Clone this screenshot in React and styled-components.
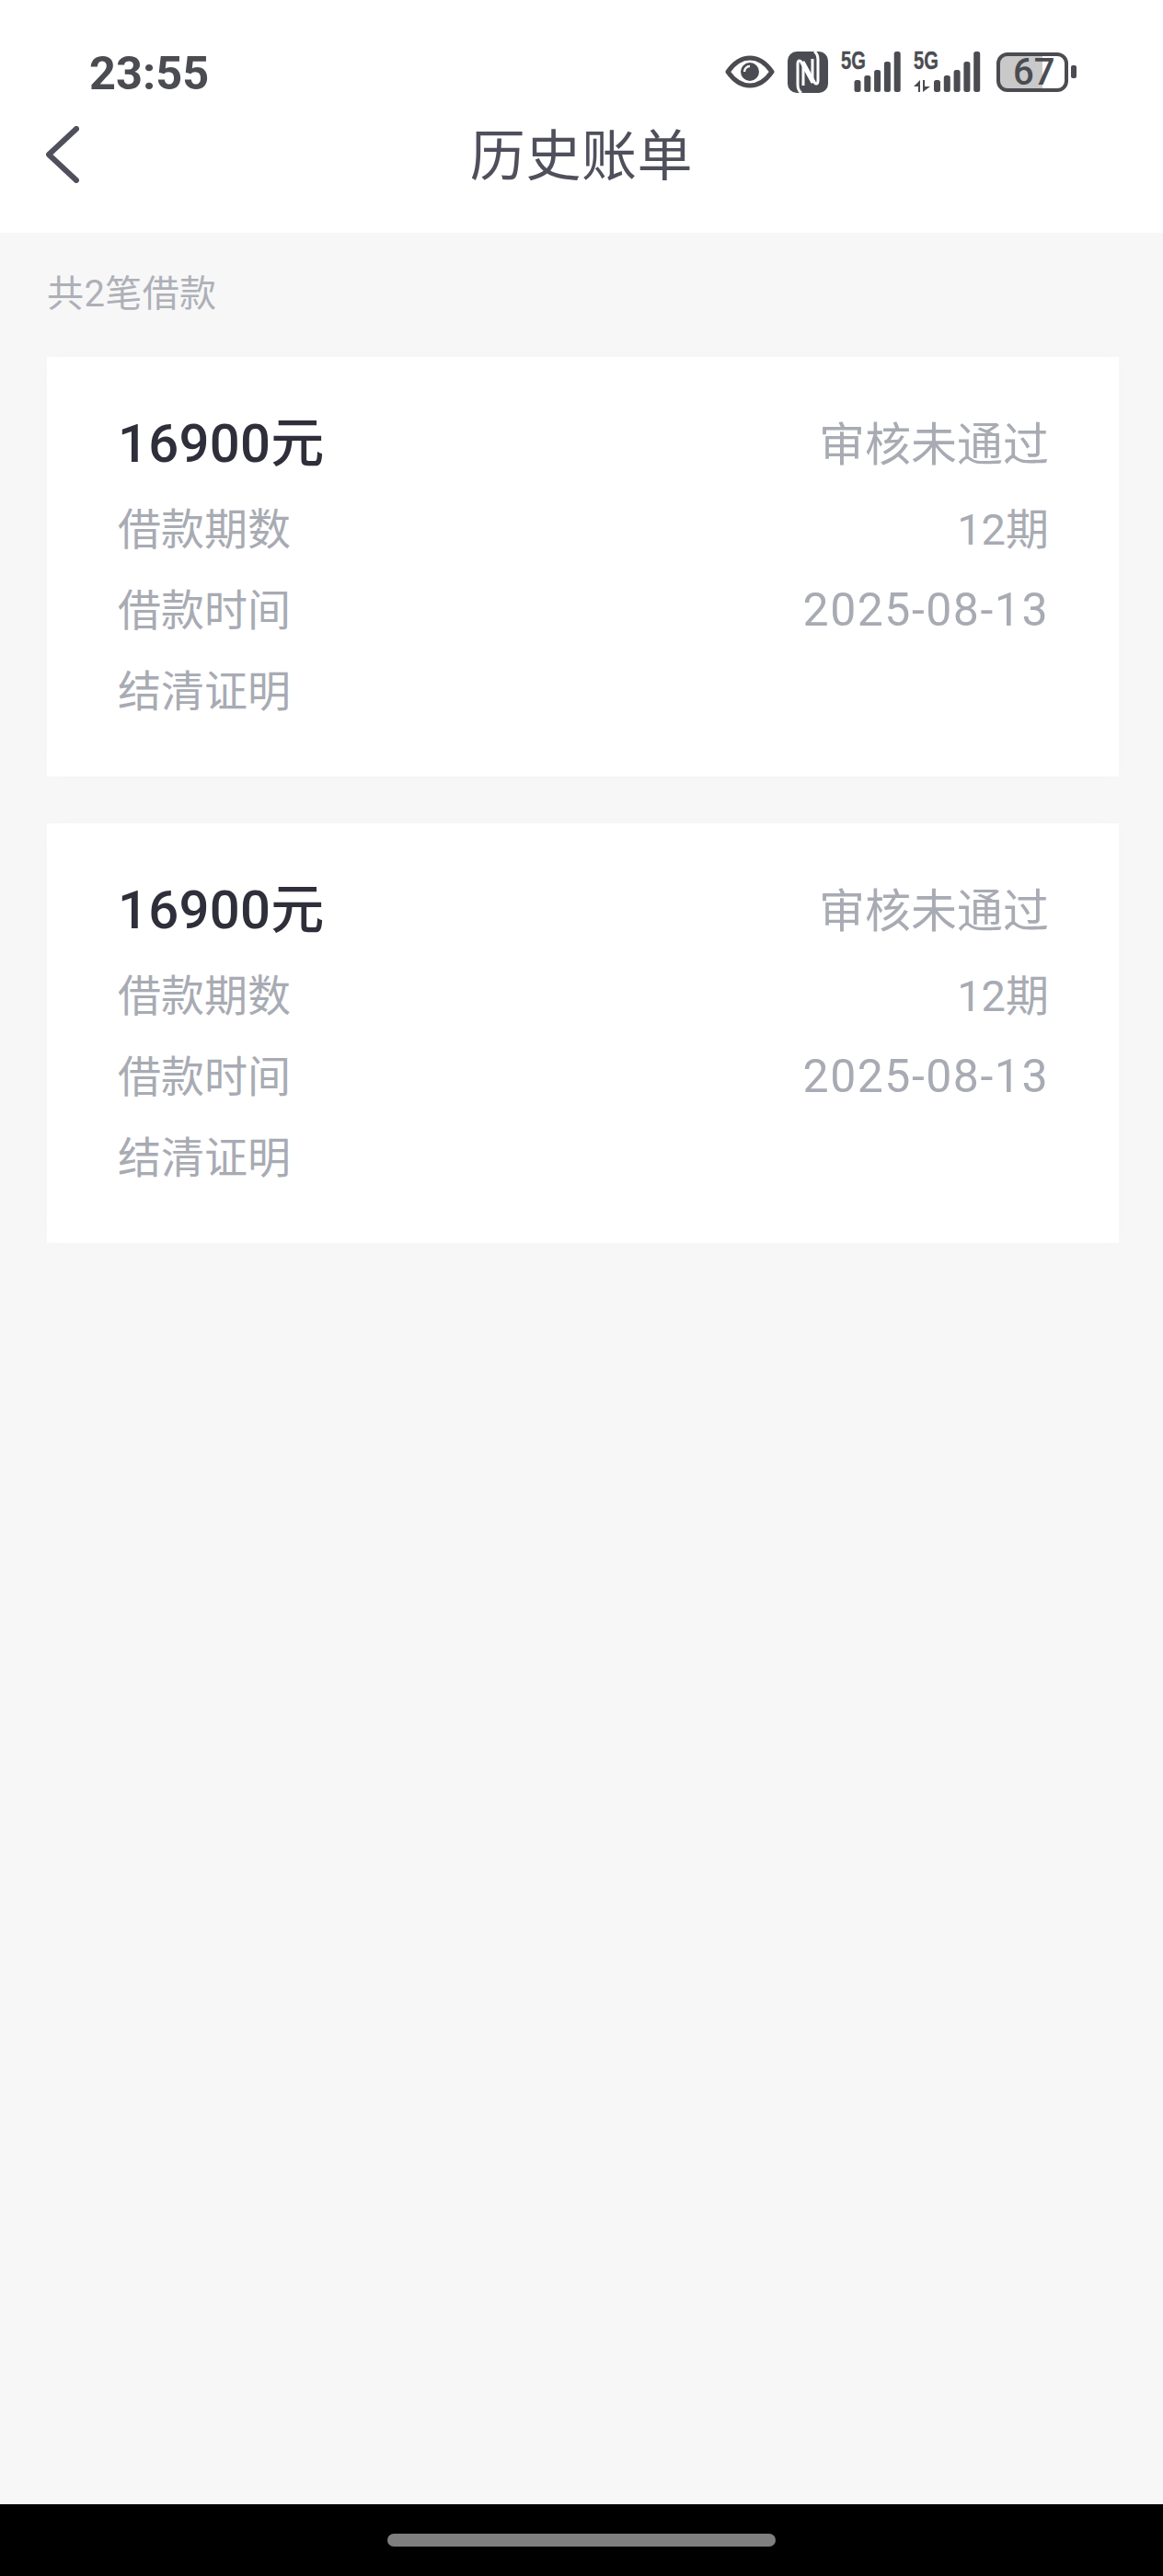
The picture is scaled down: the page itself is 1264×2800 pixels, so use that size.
import styled, { createGlobalStyle } from 'styled-components'

const GlobalStyle = createGlobalStyle`
  html, body { margin: 0; padding: 0; }
  body { font-family: Roboto, "Noto Sans CJK SC", sans-serif; background: #f7f7f7; }
`

const Page = styled.div`
  display: flex;
  flex-direction: column;
  height: 2800px;
  background: #f7f7f7;
`
const Header = styled.header`
  background: #fff;
  height: 253px;
  flex-shrink: 0;
`
const StatusBar = styled.div`
  display: flex;
  align-items: center;
  justify-content: space-between;
  box-sizing: border-box;
  height: 103px;
  padding: 53px 94px 0 97px;
`
const Time = styled.div`
  font-family: Roboto, sans-serif;
  font-size: 50.5px;
  font-weight: 700;
  line-height: 50px;
  padding-top: 4px;
  color: #4b4c52;
`
const StatusIcons = styled.div`
  display: flex;
  align-items: center;
  gap: 14px;
`
const Signal = styled.div`
  position: relative;
  display: flex;
  width: ${p => (p.$arrows ? '76px' : '65px')};
  height: 45px;
`
const NetLabel = styled.span`
  position: absolute;
  left: 0;
  top: 0;
  font-family: "Liberation Sans", sans-serif;
  font-size: 28px;
  font-weight: 700;
  line-height: 20px;
  color: #4b4c52;
  -webkit-text-stroke: 0.4px #4b4c52;
  transform: scaleX(0.72);
  transform-origin: left top;
`
const Battery = styled.div`
  display: flex;
  align-items: center;
  gap: 3px;
`
const BatteryBody = styled.div`
  box-sizing: border-box;
  width: 78px;
  height: 43px;
  padding-left: 14px;
  border: 4px solid #4b4c52;
  border-radius: 12px;
  background: linear-gradient(to right, #c9c9c9 46px, #fff 46px);
  font-size: 40px;
  font-weight: 500;
  line-height: 35px;
  color: #4b4c52;
`
const BatteryNub = styled.div`
  width: 6px;
  height: 14px;
  border-radius: 2px;
  background: #4b4c52;
`
const NavBar = styled.div`
  display: grid;
  grid-template-columns: 1fr auto 1fr;
  align-items: center;
  height: 130px;
  padding-left: 50px;
`
const Title = styled.h1`
  margin: 0 0 0 -50px;
  padding-bottom: 6px;
  font-family: "Noto Sans CJK SC", sans-serif;
  font-size: 60px;
  font-weight: 400;
  letter-spacing: 0.6px;
  color: #4f505c;
  line-height: 118px;
`
const Content = styled.main`
  flex: 1;
  box-sizing: border-box;
  padding: 0 48px 0 51px;
`
const Count = styled.div`
  height: 135px;
  font-size: 40px;
  line-height: 40px;
  letter-spacing: 0.4px;
  padding-top: 47px;
  box-sizing: border-box;
  color: #aeb0b8;
`
const Card = styled.section`
  box-sizing: border-box;
  height: 456px;
  margin-bottom: 51px;
  padding: 50px 76px 0 77px;
  background: #fff;
  box-shadow: 0 0 24px rgba(0, 0, 0, 0.012);
`
const Row = styled.div`
  display: flex;
  align-items: center;
  justify-content: space-between;
  box-sizing: border-box;
  height: 88px;
  padding-bottom: 7px;
  font-size: 47px;
  color: #a8abb3;
  margin-bottom: ${p => (p.$first ? '5px' : '0')};
`
const Amount = styled.span`
  font-size: 58px;
  font-weight: 500;
  letter-spacing: 0.3px;
  padding-bottom: 3px;
  color: #2f2f3b;
`
const Status = styled.span`
  font-size: 50px;
`
const DateValue = styled.span`
  font-size: 50px;
  letter-spacing: 1.5px;
  padding-top: 7px;
`
const BottomBar = styled.div`
  display: flex;
  justify-content: center;
  height: 78px;
  flex-shrink: 0;
  padding-top: 32px;
  box-sizing: border-box;
  background: #000;
`
const HomeIndicator = styled.div`
  width: 422px;
  height: 14px;
  border-radius: 7px;
  background: #7f7f7f;
`

const ICON = '#4b4c52'
const BAR_HEIGHTS = [13, 18, 24, 33, 44]

const EyeIcon = () => (
  <svg width="54" height="36" viewBox="0 0 54 36">
    <path d="M3 18C10 8 18 3 27 3s17 5 24 15c-7 10-15 15-24 15S10 28 3 18Z" fill="none" stroke={ICON} strokeWidth="5" strokeLinejoin="round" />
    <circle cx="27" cy="18" r="10" fill={ICON} />
    <path d="M21 18a6 6 0 0 1 6-6" fill="none" stroke="#fff" strokeWidth="2.4" />
  </svg>
)

const NfcIcon = () => (
  <svg width="44" height="45" viewBox="0 0 44 45">
    <rect width="44" height="45" rx="10" fill={ICON} />
    <path d="M15 45c-3-2-4-5-4-9V13c0-3 2-4 3.500-2L27 34V8" fill="none" stroke="#fff" strokeWidth="3" />
    <path d="M29 0c3 2 4 5 4 9v23c0 3-2 4-3.500 2L17 11v26" fill="none" stroke="#fff" strokeWidth="3" />
  </svg>
)

const SignalIcon = ({ arrows }) => {
  const left = arrows ? 22 : 14.5
  return (
    <Signal $arrows={arrows}>
      <svg width={arrows ? 76 : 65} height="45" viewBox={arrows ? '0 0 76 45' : '0 0 65 45'}>
        {arrows && <path d="M0 38L7 31V44H5V38ZM10 31V44L18 38H12V31Z" fill={ICON} />}
        {BAR_HEIGHTS.map((h, i) => (
          <rect key={h} x={left + i * 10.8} y={44 - h} width="7" height={h} rx="2.5" fill={ICON} />
        ))}
      </svg>
      <NetLabel>5G</NetLabel>
    </Signal>
  )
}

const BackIcon = () => (
  <svg width="36" height="62" viewBox="0 0 36 62">
    <path d="M33 3L3 31l30 28" fill="none" stroke="#4f505c" strokeWidth="6" strokeLinecap="round" strokeLinejoin="round" />
  </svg>
)

const loans = [
  { id: 1, amount: '16900元', status: '审核未通过', period: '12期', date: '2025-08-13' },
  { id: 2, amount: '16900元', status: '审核未通过', period: '12期', date: '2025-08-13' },
]

function App() {
  return (
    <Page>
      <GlobalStyle />
      <Header>
        <StatusBar>
          <Time>23:55</Time>
          <StatusIcons>
            <EyeIcon />
            <NfcIcon />
            <SignalIcon />
            <SignalIcon arrows />
            <Battery>
              <BatteryBody>67</BatteryBody>
              <BatteryNub />
            </Battery>
          </StatusIcons>
        </StatusBar>
        <NavBar>
          <BackIcon />
          <Title>历史账单</Title>
        </NavBar>
      </Header>
      <Content>
        <Count>共2笔借款</Count>
        {loans.map(loan => (
          <Card key={loan.id}>
            <Row $first>
              <Amount>{loan.amount}</Amount>
              <Status>{loan.status}</Status>
            </Row>
            <Row>
              <span>借款期数</span>
              <span>{loan.period}</span>
            </Row>
            <Row>
              <span>借款时间</span>
              <DateValue>{loan.date}</DateValue>
            </Row>
            <Row>
              <span>结清证明</span>
            </Row>
          </Card>
        ))}
      </Content>
      <BottomBar>
        <HomeIndicator />
      </BottomBar>
    </Page>
  )
}

export default App
